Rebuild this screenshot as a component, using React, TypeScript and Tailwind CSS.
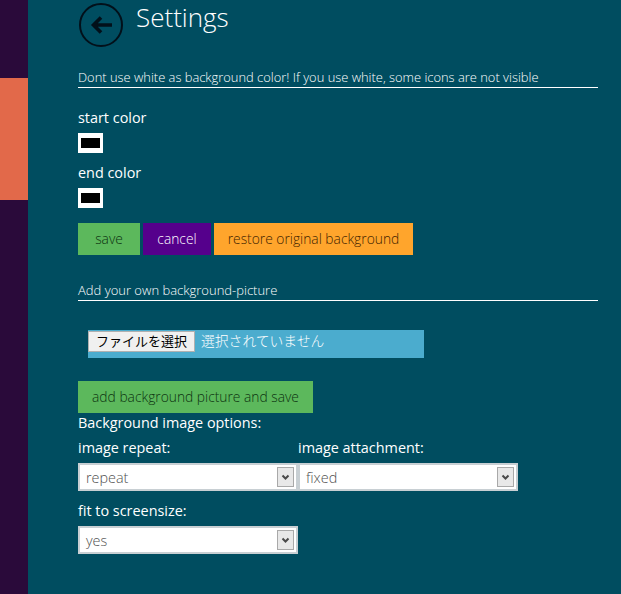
import React from "react";

const Chevron = () => (
  <span className="absolute right-[2px] top-[2px] flex h-[20px] w-[17px] items-center justify-center border border-[#a9a9a9] bg-[#e8e8e8]">
    <svg width="9" height="7" viewBox="0 0 9 7" fill="none">
      <path d="M1.5 1.5 L4.5 4.5 L7.5 1.5" stroke="#4a4a4a" strokeWidth="2" />
    </svg>
  </span>
);

const Select = ({ value, w }: { value: string; w: string }) => (
  <div className={`relative h-[28px] shrink-0 border-2 border-[#c8cfd3] bg-white pl-[6px] text-[14.4px] leading-[25px] text-[#505050] ${w}`}>
    {value}
    <Chevron />
  </div>
);

const Swatch = () => (
  <div className="h-[20px] w-[25px] border-x-[3px] border-y-[5px] border-white bg-black" />
);

const Btn = ({ children, cls }: { children: React.ReactNode; cls: string }) => (
  <button className={`flex h-[32px] items-center justify-center text-[13.8px] ${cls}`}>{children}</button>
);

export default function App() {
  return (
    <div
      className="flex h-[594px] w-[621px] overflow-hidden bg-[#004d60] text-white"
      style={{ fontFamily: '"Open Sans", "Noto Sans CJK JP", sans-serif' }}
    >
      <aside className="flex w-[28px] shrink-0 flex-col bg-[#2a0a3a] pt-[78px]">
        <div className="h-[122px] bg-[#e2694a]" />
      </aside>
      <main className="ml-[50px] w-[520px] font-light">
        <header className="flex h-[47px] items-start pt-[3px]">
          <svg className="ml-px shrink-0" width="44" height="44" viewBox="0 0 44 44" fill="none">
            <circle cx="22" cy="22" r="21" stroke="#02101a" strokeWidth="2" />
            <path d="M33 22 H15 M22 14.5 L14.5 22 L22 29.5" stroke="#02101a" strokeWidth="3.6" />
          </svg>
          <h1 className="ml-[13px] text-[26px] leading-[28px] font-light">Settings</h1>
        </header>
        <p className="mt-[21px] border-b border-white pb-[1px] text-[12.9px] leading-[18px]">
          Dont use white as background color! If you use white, some icons are not visible
        </p>
        <div className="mt-[20px] text-[14.4px] leading-[20px] font-normal">start color</div>
        <div className="mt-[5px]"><Swatch /></div>
        <div className="mt-[10px] text-[14.4px] leading-[20px] font-normal">end color</div>
        <div className="mt-[5px]"><Swatch /></div>
        <div className="mt-[15px] flex gap-[3px]">
          <Btn cls="w-[62px] bg-[#5cb85c] text-[#0c3310]">save</Btn>
          <Btn cls="w-[68px] bg-[#55008c] text-white">cancel</Btn>
          <Btn cls="w-[199px] bg-[#ffa52c] text-[#3f2400]">restore original background</Btn>
        </div>
        <p className="mt-[26px] border-b border-white pb-[1px] text-[13px] leading-[18px]">
          Add your own background-picture
        </p>
        <div className="ml-[10px] mt-[29px] flex h-[28px] w-[336px] items-start bg-[#4bacce] pt-[1px]">
          <span className="flex h-[21px] w-[107px] items-center justify-center border border-[#b0b0b0] bg-[#f0f0f0] text-[13px] leading-none font-normal text-black">
            ファイルを選択
          </span>
          <span className="ml-[6px] text-[13.8px] leading-[20px]">選択されていません</span>
        </div>
        <Btn cls="mt-[23px] w-[235px] bg-[#5cb85c] text-[#0c3310]">add background picture and save</Btn>
        <div className="text-[14.4px] leading-[20px] font-normal">Background image options:</div>
        <div className="mt-[5px] flex">
          <div className="w-[220px]">
            <div className="text-[14.4px] leading-[20px] font-normal">image repeat:</div>
            <div className="mt-[5px]"><Select value="repeat" w="w-[220px]" /></div>
          </div>
          <div className="w-[220px]">
            <div className="text-[14.4px] leading-[20px] font-normal">image attachment:</div>
            <div className="mt-[5px]"><Select value="fixed" w="w-[220px]" /></div>
          </div>
        </div>
        <div className="mt-[10px] text-[14.4px] leading-[20px] font-normal">fit to screensize:</div>
        <div className="mt-[5px]"><Select value="yes" w="w-[220px]" /></div>
      </main>
    </div>
  );
}
